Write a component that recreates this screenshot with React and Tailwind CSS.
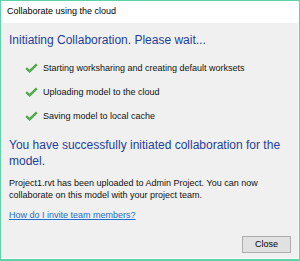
import React from "react";

function Check() {
  return (
    <svg width="13" height="10" viewBox="0 0 13 10" className="shrink-0">
      <path d="M1.2 5.2 L4.6 8.4 L11.8 1.4" fill="none" stroke="#4fa84a" strokeWidth="2.4" strokeLinecap="butt" strokeLinejoin="miter" />
    </svg>
  );
}

export default function App() {
  const font = { fontFamily: '"Liberation Sans", Arial, sans-serif' };
  return (
    <div className="w-[300px] h-[261px] border border-b-2 border-[#5fd3a8] flex flex-col bg-[#f0f0f0] text-[#111111]" style={font}>
      <div className="h-[22px] bg-white flex items-center pl-[6px] text-[9px] text-black shrink-0">
        Collaborate using the cloud
      </div>
      <div className="flex-1 flex flex-col px-[8px] pt-[9px] border-b border-r border-[#fbfbfb]">
        <div className="text-[12px] leading-[16px] text-[#1f3e9c]">Initiating Collaboration. Please wait...</div>
        <div className="flex flex-col gap-[8px] mt-[12px] pl-[16px] text-[9px] leading-[16px]">
          <div className="flex items-center gap-[5px]"><Check /><span>Starting worksharing and creating default worksets</span></div>
          <div className="flex items-center gap-[5px]"><Check /><span>Uploading model to the cloud</span></div>
          <div className="flex items-center gap-[5px]"><Check /><span>Saving model to local cache</span></div>
        </div>
        <div className="text-[12px] leading-[16px] text-[#1f3e9c] mt-[13px] mr-[-4px]">You have successfully initiated collaboration for the model.</div>
        <div className="text-[9px] leading-[12px] mt-[8px] pr-[20px]">Project1.rvt has been uploaded to Admin Project. You can now collaborate on this model with your project team.</div>
        <a className="text-[9px] leading-[12px] mt-[8px] text-[#1a6fd0] underline w-fit">How do I invite team members?</a>
        <div className="flex justify-end mt-[15px] mr-[-1px]">
          <button className="w-[49px] h-[17px] border border-[#adadad] bg-[#e1e1e1] text-[9px] leading-none text-black">Close</button>
        </div>
      </div>
    </div>
  );
}
